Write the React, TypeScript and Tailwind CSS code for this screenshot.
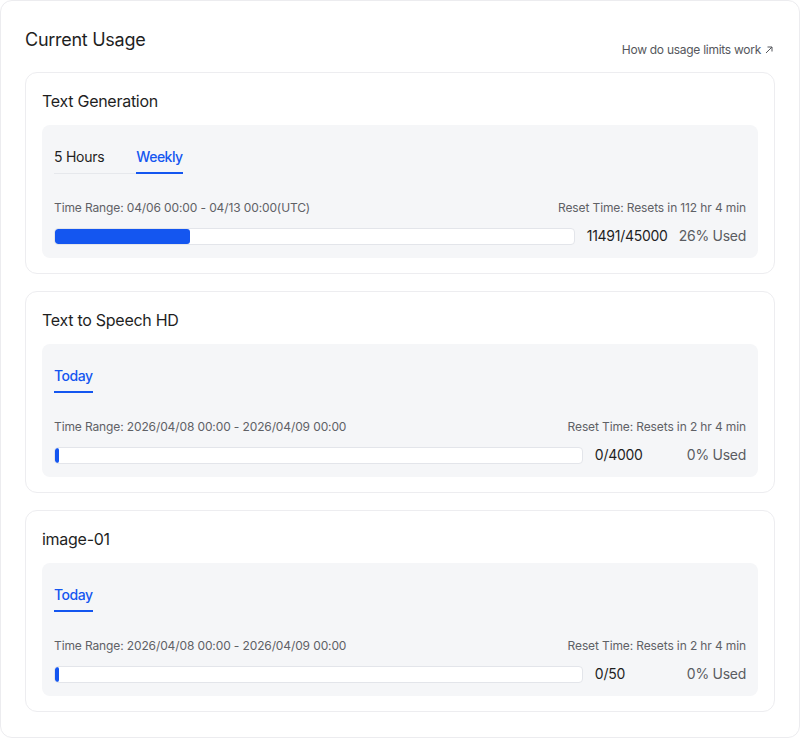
import React from "react";

type Tab = { label: string; active: boolean };
type Card = {
  title: string;
  tabs: Tab[];
  range: string;
  reset: string;
  count: string;
  pct: number;
  used: string;
};

const cards: Card[] = [
  {
    title: "Text Generation",
    tabs: [
      { label: "5 Hours", active: false },
      { label: "Weekly", active: true },
    ],
    range: "Time Range: 04/06 00:00 - 04/13 00:00(UTC)",
    reset: "Reset Time: Resets in 112 hr 4 min",
    count: "11491/45000",
    pct: 26,
    used: "26% Used",
  },
  {
    title: "Text to Speech HD",
    tabs: [{ label: "Today", active: true }],
    range: "Time Range: 2026/04/08 00:00 - 2026/04/09 00:00",
    reset: "Reset Time: Resets in 2 hr 4 min",
    count: "0/4000",
    pct: 0,
    used: "0% Used",
  },
  {
    title: "image-01",
    tabs: [{ label: "Today", active: true }],
    range: "Time Range: 2026/04/08 00:00 - 2026/04/09 00:00",
    reset: "Reset Time: Resets in 2 hr 4 min",
    count: "0/50",
    pct: 0,
    used: "0% Used",
  },
];

function UsageCard({ c }: { c: Card }) {
  return (
    <div className="rounded-[12px] border border-[#ededf0] bg-white px-4 pt-4 pb-[15px]">
      <div className="text-[16px] leading-6 text-[#1f1f1f]">{c.title}</div>
      <div className="mt-3 rounded-[8px] bg-[#f5f6f8] px-3 pt-3 pb-3">
        <div className="inline-flex gap-8 border-b border-[#e6e8ec]">
          {c.tabs.map((t) => (
            <div
              key={t.label}
              className={
                t.active
                  ? "-mb-px border-b-2 border-[#1456f0] pt-[10px] pb-[5px] text-[14px] leading-5 font-medium tracking-[-0.035em] text-[#1456f0]"
                  : "-mb-px border-b-2 border-transparent pt-[10px] pb-[5px] text-[14px] leading-5 text-[#1f1f1f]"
              }
            >
              {t.label}
            </div>
          ))}
        </div>
        <div className="mt-[25px] flex justify-between text-[12px] leading-[18px] tracking-[-0.01em] text-[#5f6166]">
          <span>{c.range}</span>
          <span>{c.reset}</span>
        </div>
        <div className="mt-[9px] flex h-5 items-center">
          <div className="h-[17px] flex-1 overflow-hidden rounded-[4px] border border-[#e3e5ea] bg-white">
            <div
              className="h-full rounded-[3px] bg-[#1456f0]"
              style={{ width: c.pct > 0 ? `${c.pct}%` : "4px" }}
            />
          </div>
          <div className="ml-3 w-20 text-[14px] leading-5 text-[#1f1f1f]">{c.count}</div>
          <div className="ml-3 text-[14px] leading-5 text-[#5a5c61]">{c.used}</div>
        </div>
      </div>
    </div>
  );
}

export default function App() {
  return (
    <div
      className="h-[738px] w-[800px] rounded-[12px] border border-[#ececef] bg-white px-6 pt-6 pb-6 tracking-[-0.017em]"
      style={{ fontFamily: "Inter, 'Noto Sans', sans-serif" }}
    >
      <div className="flex h-[33px] items-end justify-between">
        <div className="mb-[4px] text-[18px] leading-[28px] text-[#1f1f1f]">Current Usage</div>
        <a className="mr-[2px] flex items-center gap-[4px] text-[12px] leading-4 text-[#55575c]">
          How do usage limits work
          <svg width="8" height="8" viewBox="0 0 8 8" fill="none" stroke="#55575c" strokeWidth="1">
            <path d="M1 7L7 1M2.5 1H7V5.5" />
          </svg>
        </a>
      </div>
      <div className="mt-[14px] flex flex-col gap-[17px]">
        {cards.map((c) => (
          <UsageCard key={c.title} c={c} />
        ))}
      </div>
    </div>
  );
}
